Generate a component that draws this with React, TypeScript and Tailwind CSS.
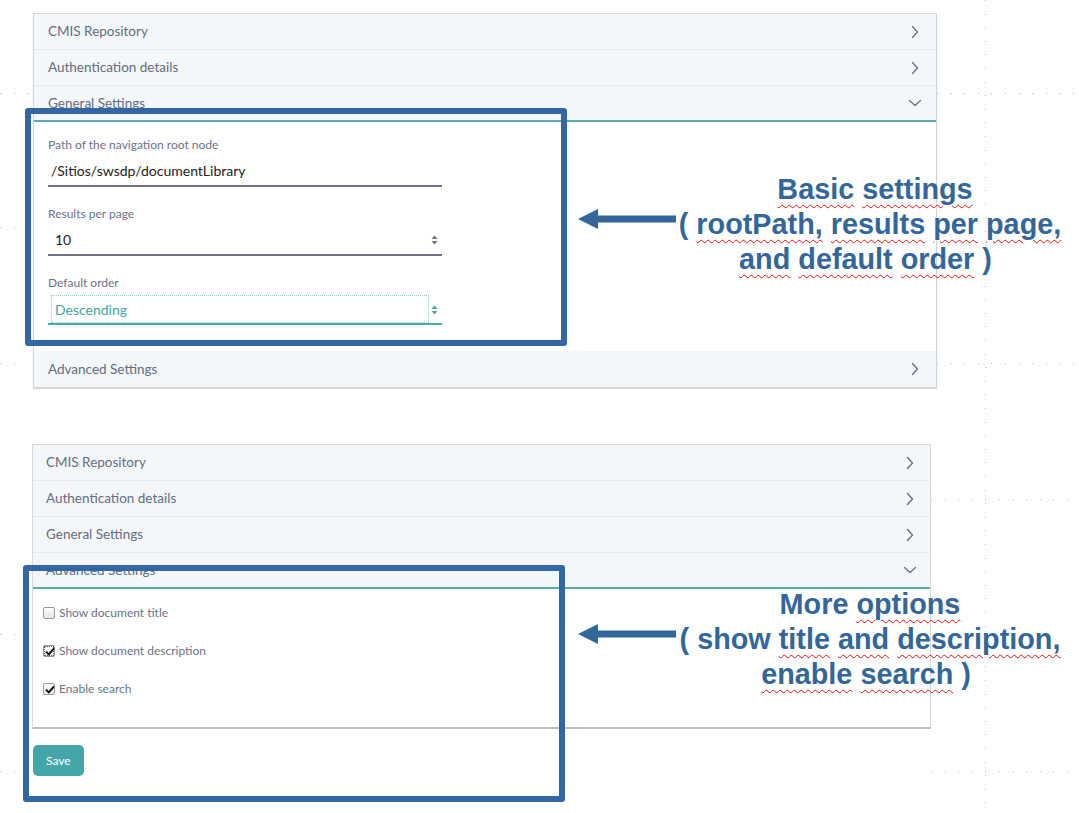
import React from "react";

const ChevronRight = () => (
  <svg width="8" height="14" viewBox="0 0 8 14" fill="none">
    <path d="M1.5 1.5 L6.5 7 L1.5 12.5" stroke="#6b7189" strokeWidth="1.4" strokeLinecap="round" strokeLinejoin="round" />
  </svg>
);

const ChevronDown = () => (
  <svg width="14" height="8" viewBox="0 0 14 8" fill="none">
    <path d="M1.5 1.5 L7 6.5 L12.5 1.5" stroke="#6b7189" strokeWidth="1.4" strokeLinecap="round" strokeLinejoin="round" />
  </svg>
);

const Spinner = ({ color }: { color: string }) => (
  <svg width="7" height="10" viewBox="0 0 7 10">
    <path d="M3.5 0.5 L6.5 4 L0.5 4 Z" fill={color} />
    <path d="M3.5 9.5 L6.5 6 L0.5 6 Z" fill={color} />
  </svg>
);

const Header = ({ title, open, last, px }: { title: string; open?: boolean; last?: boolean; px: string }) => (
  <div
    className={
      "h-[36px] flex items-center justify-between bg-[#f4f7fa] text-[13.5px] text-[#636d80] " +
      px +
      (open ? " border-b-2 border-[#58aeac]" : last ? "" : " border-b border-[#e6eaef]")
    }
  >
    <span>{title}</span>
    <span className="flex items-center justify-center w-[14px]">{open ? <ChevronDown /> : <ChevronRight />}</span>
  </div>
);

const Checkbox = ({ checked, focus }: { checked?: boolean; focus?: boolean }) => (
  <span
    className={
      "relative w-[12px] h-[12px] rounded-[2px] border border-[#9a9a9a] bg-[linear-gradient(#fdfdfd,#e6e6e6)] flex items-center justify-center " +
      (focus ? "outline outline-1 outline-dotted outline-[#555] outline-offset-[-2px]" : "")
    }
  >
    {checked && (
      <svg width="10" height="9" viewBox="0 0 10 9" className="absolute left-[1px] top-[1px]">
        <path d="M1 4.6 L3.8 7.4 L9 1.4" stroke="#111" strokeWidth="2" fill="none" strokeLinejoin="miter" />
      </svg>
    )}
  </span>
);

const Arrow = () => (
  <svg width="100" height="22" viewBox="0 0 100 22">
    <path d="M0 11 L20 1 L20 7.5 L98 7.5 L98 14.5 L20 14.5 L20 21 Z" fill="#336699" />
  </svg>
);

const Wavy = ({ children }: { children: React.ReactNode }) => (
  <span className="underline decoration-wavy decoration-[#e01010] decoration-1 underline-offset-[5px]">{children}</span>
);

export default function App() {
  return (
    <div className="relative w-[1079px] h-[813px] bg-white overflow-hidden font-['Lato',sans-serif]">
      {/* faint grid dots */}
      <div className="absolute left-[985px] top-0 w-[1px] h-[813px] bg-[repeating-linear-gradient(to_bottom,#b9b9b9_0_1px,transparent_1px_13.6px)]" />
      <div className="absolute left-[937px] top-[93px] w-[142px] h-[1px] bg-[repeating-linear-gradient(to_right,#b9b9b9_0_1px,transparent_1px_13.6px)]" />
      <div className="absolute left-[937px] top-[363px] w-[142px] h-[1px] bg-[repeating-linear-gradient(to_right,#b9b9b9_0_1px,transparent_1px_13.6px)]" />
      <div className="absolute left-[931px] top-[499px] w-[148px] h-[1px] bg-[repeating-linear-gradient(to_right,#b9b9b9_0_1px,transparent_1px_13.6px)]" />
      <div className="absolute left-[931px] top-[771px] w-[148px] h-[1px] bg-[repeating-linear-gradient(to_right,#b9b9b9_0_1px,transparent_1px_13.6px)]" />
      <div className="absolute left-0 top-[93px] w-[33px] h-[1px] bg-[repeating-linear-gradient(to_right,#b9b9b9_0_1px,transparent_1px_13.6px)]" />
      <div className="absolute left-0 top-[227px] w-[26px] h-[1px] bg-[repeating-linear-gradient(to_right,#b9b9b9_0_1px,transparent_1px_13.6px)]" />
      <div className="absolute left-0 top-[363px] w-[26px] h-[1px] bg-[repeating-linear-gradient(to_right,#b9b9b9_0_1px,transparent_1px_13.6px)]" />
      <div className="absolute left-0 top-[634px] w-[23px] h-[1px] bg-[repeating-linear-gradient(to_right,#b9b9b9_0_1px,transparent_1px_13.6px)]" />
      <div className="absolute left-0 top-[771px] w-[23px] h-[1px] bg-[repeating-linear-gradient(to_right,#b9b9b9_0_1px,transparent_1px_13.6px)]" />

      {/* Top panel */}
      <div className="pt-[13px] pl-[33px]">
        <div className="relative w-[904px] border border-[#d2d4d8] shadow-[0_1px_1px_rgba(0,0,0,0.15)] bg-white">
          <Header title="CMIS Repository" px="px-[14px]" />
          <Header title="Authentication details" px="px-[14px]" />
          <Header title="General Settings" open px="px-[14px]" />
          <div className="pt-[15px] pb-[26px] pl-[14px] flex flex-col gap-[19px]">
            <div className="w-[394px]">
              <div className="text-[12px] leading-[16px] text-[#6b7189]">Path of the navigation root node</div>
              <div className="mt-[1px] h-[33px] pt-[2px] border-b-2 border-[#6e7189] flex items-center pl-[3px] text-[14px] text-[#222]">
                /Sitios/swsdp/documentLibrary
              </div>
            </div>
            <div className="w-[394px]">
              <div className="text-[12px] leading-[16px] text-[#6b7189]">Results per page</div>
              <div className="mt-[1px] h-[33px] pt-[2px] border-b-2 border-[#6e7189] flex items-center justify-between pl-[7px] pr-[4px] text-[14px] text-[#222]">
                <span>10</span>
                <Spinner color="#6e7189" />
              </div>
            </div>
            <div className="w-[394px]">
              <div className="text-[12px] leading-[16px] text-[#6b7189]">Default order</div>
              <div className="mt-[1px] h-[33px] pt-[3px] border-b-2 border-[#4eaaa9] flex items-stretch justify-between pl-[3px] pr-[4px] text-[14px] text-[#45a5a5]">
                <span className="w-[378px] border border-dotted border-[#8fcfcd] flex items-center pl-[3px]">Descending</span>
                <span className="flex items-center pt-[2px]">
                  <Spinner color="#45a5a5" />
                </span>
              </div>
            </div>
          </div>
          <Header title="Advanced Settings" last px="px-[14px]" />
        </div>
      </div>

      {/* Bottom panel */}
      <div className="mt-[56px] pl-[32px]">
        <div className="w-[899px] border-l border-r border-t border-[#d6d8dc] border-b-2 border-b-[#bdbdbd] bg-white">
          <Header title="CMIS Repository" px="px-[13px]" />
          <Header title="Authentication details" px="px-[13px]" />
          <Header title="General Settings" px="px-[13px]" />
          <Header title="Advanced Settings" open px="px-[13px]" />
          <div className="pt-[16px] pb-[30px] pl-[10px] flex flex-col gap-[22px] text-[12px] text-[#6b7189]">
            <label className="h-[16px] flex items-center gap-[4px]">
              <Checkbox />
              <span>Show document title</span>
            </label>
            <label className="h-[16px] flex items-center gap-[4px]">
              <Checkbox checked focus />
              <span>Show document description</span>
            </label>
            <label className="h-[16px] flex items-center gap-[4px]">
              <Checkbox checked />
              <span>Enable search</span>
            </label>
          </div>
        </div>
        <div className="mt-[16px] ml-[1px]">
          <button className="h-[31px] px-[13px] rounded-[5px] bg-[#45a6aa] text-white text-[12px]">Save</button>
        </div>
      </div>

      {/* Annotation rectangles */}
      <div className="absolute left-[25px] top-[108px] w-[542px] h-[238px] border-[6px] border-[#3465a4] rounded-[3px]" />
      <div className="absolute left-[23px] top-[565px] w-[542px] h-[237px] border-[6px] border-[#3465a4] rounded-[3px]" />

      {/* Arrows */}
      <div className="absolute left-[578px] top-[208px]">
        <Arrow />
      </div>
      <div className="absolute left-[578px] top-[623px]">
        <Arrow />
      </div>

      {/* Annotation texts */}
      <div className="absolute left-[670px] top-[172px] w-[400px] text-center font-['Liberation_Sans',Arial,sans-serif] font-bold text-[28.8px] leading-[35px] text-[#336699] whitespace-nowrap">
        <div className="pl-[10px]">
          <Wavy>Basic</Wavy> <Wavy>settings</Wavy>
        </div>
        <div>
          ( <Wavy>rootPath,</Wavy> <Wavy>results</Wavy> <Wavy>per</Wavy> <Wavy>page,</Wavy>
        </div>
        <div className="pr-[9px]">
          <Wavy>and</Wavy> <Wavy>default</Wavy> <Wavy>order</Wavy> )
        </div>
      </div>
      <div className="absolute left-[670px] top-[587px] w-[400px] text-center font-['Liberation_Sans',Arial,sans-serif] font-bold text-[28.8px] leading-[35px] text-[#336699] whitespace-nowrap">
        <div>
          More <Wavy>options</Wavy>
        </div>
        <div>
          ( show <Wavy>title</Wavy> <Wavy>and</Wavy> <Wavy>description,</Wavy>
        </div>
        <div className="pr-[8px]">
          <Wavy>enable</Wavy> <Wavy>search</Wavy> )
        </div>
      </div>
    </div>
  );
}
